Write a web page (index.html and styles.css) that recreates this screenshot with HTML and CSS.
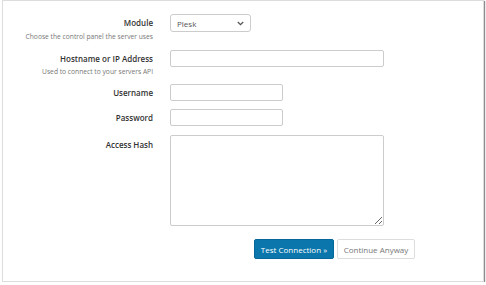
FILE: index.html
```html
<!DOCTYPE html>
<html lang="en">
<head>
  <meta charset="UTF-8" />
  <title>Server Module</title>
  <link rel="stylesheet" href="styles.css">
</head>
<body>

  <div class="panel">
    <form class="server-form">
      <div class="row row-module">
        <div class="label-col">
          <label for="module">Module</label>
          <div class="help">Choose the control panel the server uses</div>
        </div>
        <div class="field-col">
          <div class="select-wrap">
            <select id="module" name="module">
              <option>Plesk</option>
              <option>cPanel</option>
              <option>DirectAdmin</option>
            </select>
            <svg class="chevron" width="7" height="5" viewBox="0 0 7 5"><path d="M0.8 1 L3.5 3.7 L6.2 1" fill="none" stroke="#555" stroke-width="1.3"/></svg>
          </div>
        </div>
      </div>

      <div class="row row-host">
        <div class="label-col">
          <label for="hostname">Hostname or IP Address</label>
          <div class="help">Used to connect to your servers API</div>
        </div>
        <div class="field-col">
          <input type="text" id="hostname" name="hostname" class="wide">
        </div>
      </div>

      <div class="row row-user">
        <div class="label-col">
          <label for="username">Username</label>
        </div>
        <div class="field-col">
          <input type="text" id="username" name="username" class="short">
        </div>
      </div>

      <div class="row row-pass">
        <div class="label-col">
          <label for="password">Password</label>
        </div>
        <div class="field-col">
          <input type="password" id="password" name="password" class="short">
        </div>
      </div>

      <div class="row row-hash">
        <div class="label-col">
          <label for="accesshash">Access Hash</label>
        </div>
        <div class="field-col">
          <textarea id="accesshash" name="accesshash"></textarea>
        </div>
      </div>

      <div class="actions">
        <button type="submit" class="btn btn-primary">Test Connection &raquo;</button>
        <button type="button" class="btn btn-default">Continue Anyway</button>
      </div>
    </form>
  </div>

</body>
</html>
```

FILE: styles.css
```css
body {
  margin: 0;
  font-family: 'Open Sans', sans-serif;
  background: #fff;
  color: #333;
}

.panel {
  margin-left: 2px;
  width: 480px;
  height: 280px;
  border: 1px solid #ddd;
  box-shadow: 1px 1px 1px rgba(0, 0, 0, 0.45);
  background: #fff;
}

.server-form {
  padding-top: 13px;
}

.row {
  display: flex;
}

.label-col {
  width: 150px;
  text-align: right;
}

.field-col {
  margin-left: 17px;
}

label {
  display: block;
  font-size: 8px;
  font-weight: 600;
  line-height: 18px;
  color: #333;
}

.help {
  font-size: 6.7px;
  color: #777;
  line-height: 10px;
  white-space: nowrap;
}

.row-module { height: 28px; margin-bottom: 8px; }
.row-host { height: 27px; margin-bottom: 7px; }
.row-user { height: 17px; margin-bottom: 8px; }
.row-pass { height: 17px; margin-bottom: 9px; }
.row-hash { height: 91px; margin-bottom: 13px; }

.row-host label {
  line-height: 17px;
}

.row-hash label {
  line-height: 19px;
}

.select-wrap {
  position: relative;
  width: 81px;
}

select {
  display: block;
  appearance: none;
  width: 81px;
  height: 18px;
  padding: 0 6px;
  border: 1px solid #ccc;
  border-radius: 3px;
  background: #fff;
  font-family: 'Open Sans', sans-serif;
  font-size: 8px;
  color: #555;
}

.chevron {
  position: absolute;
  right: 7px;
  top: 7px;
  pointer-events: none;
}

input {
  display: block;
  height: 17px;
  box-sizing: border-box;
  border: 1px solid #ccc;
  border-radius: 2px;
  padding: 0 5px;
  font-size: 8px;
}

input.wide { width: 214px; }
input.short { width: 113px; }

textarea {
  display: block;
  width: 214px;
  height: 91px;
  box-sizing: border-box;
  border: 1px solid #ccc;
  border-radius: 2px;
  margin: 0;
}

.actions {
  display: flex;
  gap: 3px;
  padding-left: 251px;
}

.btn {
  height: 20px;
  padding: 0;
  border-radius: 2px;
  font-family: 'Open Sans', sans-serif;
  font-size: 8px;
  white-space: nowrap;
  cursor: pointer;
}

.btn-primary {
  width: 80px;
  background: #0a76ac;
  border: 1px solid #07669a;
  color: #fff;
}

.btn-default {
  width: 78px;
  background: #fff;
  border: 1px solid #ddd;
  color: #777;
}
```
